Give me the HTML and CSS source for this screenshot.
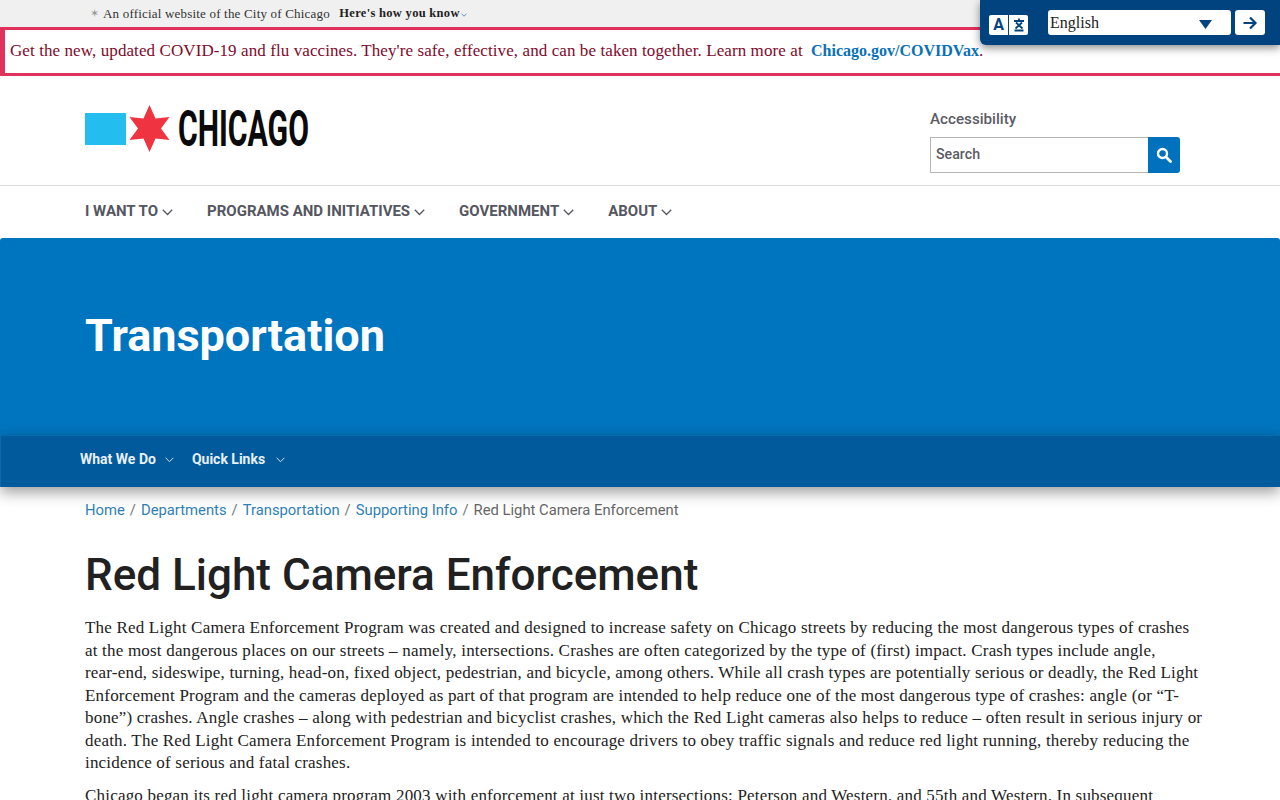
FILE: index.html
```html
<!DOCTYPE html>
<html lang="en">
<head>
<meta charset="utf-8">
<title>Red Light Camera Enforcement</title>
<link rel="stylesheet" href="styles.css">
</head>
<body>
<div class="official"><span class="star">✶</span>An official website of the City of Chicago <b class="how">Here's how you know</b><svg class="how-chev" width="6" height="4" viewBox="0 0 6 4"><path d="M.5.8 3 3.2 5.500.8" fill="none" stroke="#2a7ab8" stroke-width=".8"/></svg></div>
<div class="alert">Get the new, updated COVID-19 and flu vaccines. They're safe, effective, and can be taken together. Learn more at <a class="alert-link">Chicago.gov/COVIDVax</a>.</div>
<div class="translate">
  <div class="tr-icon">
    <span class="tr-a">A</span>
    <span class="tr-b"><svg width="12" height="14" viewBox="0 0 12 14"><path d="M1 3h10M6 .5V3M3 4.500l6.500 6M9 4.500l-6.500 6M1.500 12.500h9" fill="none" stroke="#00437f" stroke-width="1.800"/></svg></span>
  </div>
  <div class="tr-select"><span>English</span><svg width="13" height="9" viewBox="0 0 13 9"><path d="M0 0h13L6.500 9z" fill="#00437f"/></svg></div>
  <div class="tr-go"><svg width="16" height="14" viewBox="0 0 16 14"><path d="M1.500 7h12M8 1.500 13.500 7 8 12.500" fill="none" stroke="#00437f" stroke-width="2.200"/></svg></div>
</div>
<header class="head">
  <div class="logo">
    <svg width="330" height="68" viewBox="0 -10 330 68">
      <rect x="0" y="8" width="41" height="32" fill="#24bdf0"/>
      <path d="M64.500 0 70.500 13.500 84.500 12 76 23.500 84.500 35 70.500 33.500 64.500 47 58.500 33.500 44.500 35 53 23.500 44.500 12 58.500 13.500z" fill="#ef3340"/>
      <text class="logo-text" x="93" y="41" textLength="131" lengthAdjust="spacingAndGlyphs">CHICAGO</text>
    </svg>
  </div>
  <div class="tools">
    <div class="access">Accessibility</div>
    <div class="search">
      <div class="search-input">Search</div>
      <div class="search-btn"><svg width="16" height="16" viewBox="0 0 16 16"><circle cx="6.500" cy="6.500" r="4.500" fill="none" stroke="#fff" stroke-width="2.400"/><path d="M10 10l4.500 4.500" stroke="#fff" stroke-width="2.800" stroke-linecap="round"/></svg></div>
    </div>
  </div>
</header>
<nav class="mainnav">
  <a>I WANT TO<svg width="11" height="7" viewBox="0 0 11 7"><path d="M.8.800 5.500 5.500 10.200.8" fill="none" stroke="#55565f" stroke-width="1.300"/></svg></a>
  <a>PROGRAMS AND INITIATIVES<svg width="11" height="7" viewBox="0 0 11 7"><path d="M.8.800 5.500 5.500 10.200.8" fill="none" stroke="#55565f" stroke-width="1.300"/></svg></a>
  <a>GOVERNMENT<svg width="11" height="7" viewBox="0 0 11 7"><path d="M.8.800 5.500 5.500 10.200.8" fill="none" stroke="#55565f" stroke-width="1.300"/></svg></a>
  <a>ABOUT<svg width="11" height="7" viewBox="0 0 11 7"><path d="M.8.800 5.500 5.500 10.200.8" fill="none" stroke="#55565f" stroke-width="1.300"/></svg></a>
</nav>
<section class="hero"><h2>Transportation</h2></section>
<nav class="subnav">
  <a>What We Do<svg width="9" height="6" viewBox="0 0 9 6"><path d="M.6.800 4.500 4.700 8.400.8" fill="none" stroke="#d5e3f0" stroke-width="1"/></svg></a>
  <a class="ql">Quick Links<svg width="9" height="6" viewBox="0 0 9 6"><path d="M.6.800 4.500 4.700 8.400.8" fill="none" stroke="#d5e3f0" stroke-width="1"/></svg></a>
</nav>
<main class="content">
  <div class="crumbs"><a>Home</a><i>/</i><a>Departments</a><i>/</i><a>Transportation</a><i>/</i><a>Supporting Info</a><i>/</i><span>Red Light Camera Enforcement</span></div>
  <h1>Red Light Camera Enforcement</h1>
  <p>The Red Light Camera Enforcement Program was created and designed to increase safety on Chicago streets by reducing the most dangerous types of crashes<br>at the most dangerous places on our streets – namely, intersections. Crashes are often categorized by the type of (first) impact. Crash types include angle,<br>rear-end, sideswipe, turning, head-on, fixed object, pedestrian, and bicycle, among others. While all crash types are potentially serious or deadly, the Red Light<br>Enforcement Program and the cameras deployed as part of that program are intended to help reduce one of the most dangerous type of crashes: angle (or “T-<br>bone”) crashes. Angle crashes – along with pedestrian and bicyclist crashes, which the Red Light cameras also helps to reduce – often result in serious injury or<br>death. The Red Light Camera Enforcement Program is intended to encourage drivers to obey traffic signals and reduce red light running, thereby reducing the<br>incidence of serious and fatal crashes.</p>
  <p>Chicago began its red light camera program 2003 with enforcement at just two intersections: Peterson and Western, and 55th and Western. In subsequent</p>
</main>
</body>
</html>
```
FILE: styles.css
```css
html, body { margin: 0; padding: 0; height: 800px; overflow: hidden; background: #fff; }
body { font-family: "Liberation Serif", serif; color: #212121; position: relative; }
svg { display: block; }
.official { height: 27px; background: #f0f0f0; padding-left: 90px; box-sizing: border-box; display: flex; align-items: center; font-size: 13px; color: #333; white-space: pre; letter-spacing: .19px; }
.star { color: #999; margin-right: 3px; font-size: 11px; width: 10px; }
.how { margin-left: 6px; color: #1f1f1f; font-weight: 700; font-size: 12.500px; letter-spacing: .3px; }
.how-chev { margin: 2px 0 0 1px; }
.alert { height: 49px; box-sizing: border-box; border: 4px solid #e0325c; border-width: 3px 0 3px 5px; padding-left: 5px; line-height: 41px; font-size: 17px; color: #7f0a2d; letter-spacing: .09px; white-space: nowrap; }
.alert-link { margin-left: 4px; color: #0a71b8; font-weight: 700; font-size: 16px; letter-spacing: 0; }
.translate { position: absolute; top: 0; right: 0; width: 300px; height: 45px; box-sizing: border-box; background: #00437f; border-bottom-left-radius: 6px; box-shadow: 0 3px 8px rgba(0,0,0,.45); display: flex; align-items: flex-start; padding: 10px 15px 0 9px; }
.tr-icon { width: 39px; height: 20px; margin-top: 5px; display: flex; gap: 1px; }
.tr-a { width: 19px; background: #fff; border-radius: 2px 0 0 2px; font: 700 16px/20px "Roboto", sans-serif; text-align: center; color: #00437f; }
.tr-b { flex: 1; background: #fff; border-radius: 0 2px 2px 0; display: flex; align-items: center; justify-content: center; }
.tr-select { margin-left: 20px; width: 183px; height: 25px; background: #fff; border-radius: 3px; display: flex; justify-content: space-between; align-items: center; padding: 0 19px 0 2px; box-sizing: border-box; font-size: 16px; color: #222; }
.tr-select svg { margin-top: 4px; }
.tr-go { margin-left: 4px; width: 30px; height: 25px; background: #fff; border-radius: 3px; display: flex; align-items: center; justify-content: center; }
.head { height: 109px; border-bottom: 1px solid #dedede; display: flex; justify-content: space-between; padding: 0 100px 0 85px; }
.logo { padding-top: 19px; width: 330px; }
.logo-text { font: 700 50px "Liberation Sans Narrow", "Roboto", sans-serif; fill: #0a0a0a; }
.tools { width: 250px; padding-top: 34px; font-family: "Roboto", sans-serif; }
.access { font-size: 15.200px; font-weight: 500; line-height: 18px; color: #5b5c65; }
.search { display: flex; margin-top: 9px; height: 36px; }
.search-input { flex: 1; border: 1px solid #b5b5b5; border-right: 0; font-size: 14.200px; font-weight: 500; line-height: 33px; padding-left: 5px; color: #5b5c65; }
.search-btn { width: 32px; background: #0071bc; border-radius: 0 3px 3px 0; display: flex; align-items: center; justify-content: center; }
.mainnav { height: 52px; box-sizing: border-box; padding: 0 0 2px 85px; display: flex; align-items: center; gap: 34px; font: 700 15px "Roboto", sans-serif; color: #55565f; }
.mainnav a { display: flex; align-items: center; }
.mainnav svg { margin: 3px 0 0 4px; }
.hero { height: 197px; background: #0075bf; border-radius: 3px 3px 0 0; padding-left: 85px; box-sizing: border-box; }
.hero h2 { margin: 0; padding-top: 72px; font: 700 45px/52px "Roboto", sans-serif; color: #fff; }
.subnav { height: 52px; box-sizing: border-box; background: #015a9c; border-top: 1px solid #0a6aac; border-left: 1px solid #0a6aac; display: flex; align-items: center; padding: 0 0 6px 79px; font: 700 14px "Roboto", sans-serif; color: #e8f0f7; box-shadow: 0 5px 14px rgba(0,0,0,.4); position: relative; }
.subnav a { display: flex; align-items: center; }
.subnav svg { margin: 2px 0 0 9px; }
.subnav .ql { margin-left: 18px; }
.subnav .ql svg { margin-left: 11px; }
.content { padding: 0 85px; }
.crumbs { padding-top: 14px; height: 48px; font: 400 14.800px/18px "Roboto", sans-serif; color: #666; display: flex; }
.crumbs a { color: #2f7fb5; }
.crumbs i { font-style: normal; margin: 0 5px; color: #777; }
h1 { margin: 0; font: 500 44px/52px "Roboto", sans-serif; color: #212121; height: 68px; }
p { margin: 0 0 10px; font-size: 17px; line-height: 22.500px; letter-spacing: .195px; white-space: nowrap; color: #222; }
```
